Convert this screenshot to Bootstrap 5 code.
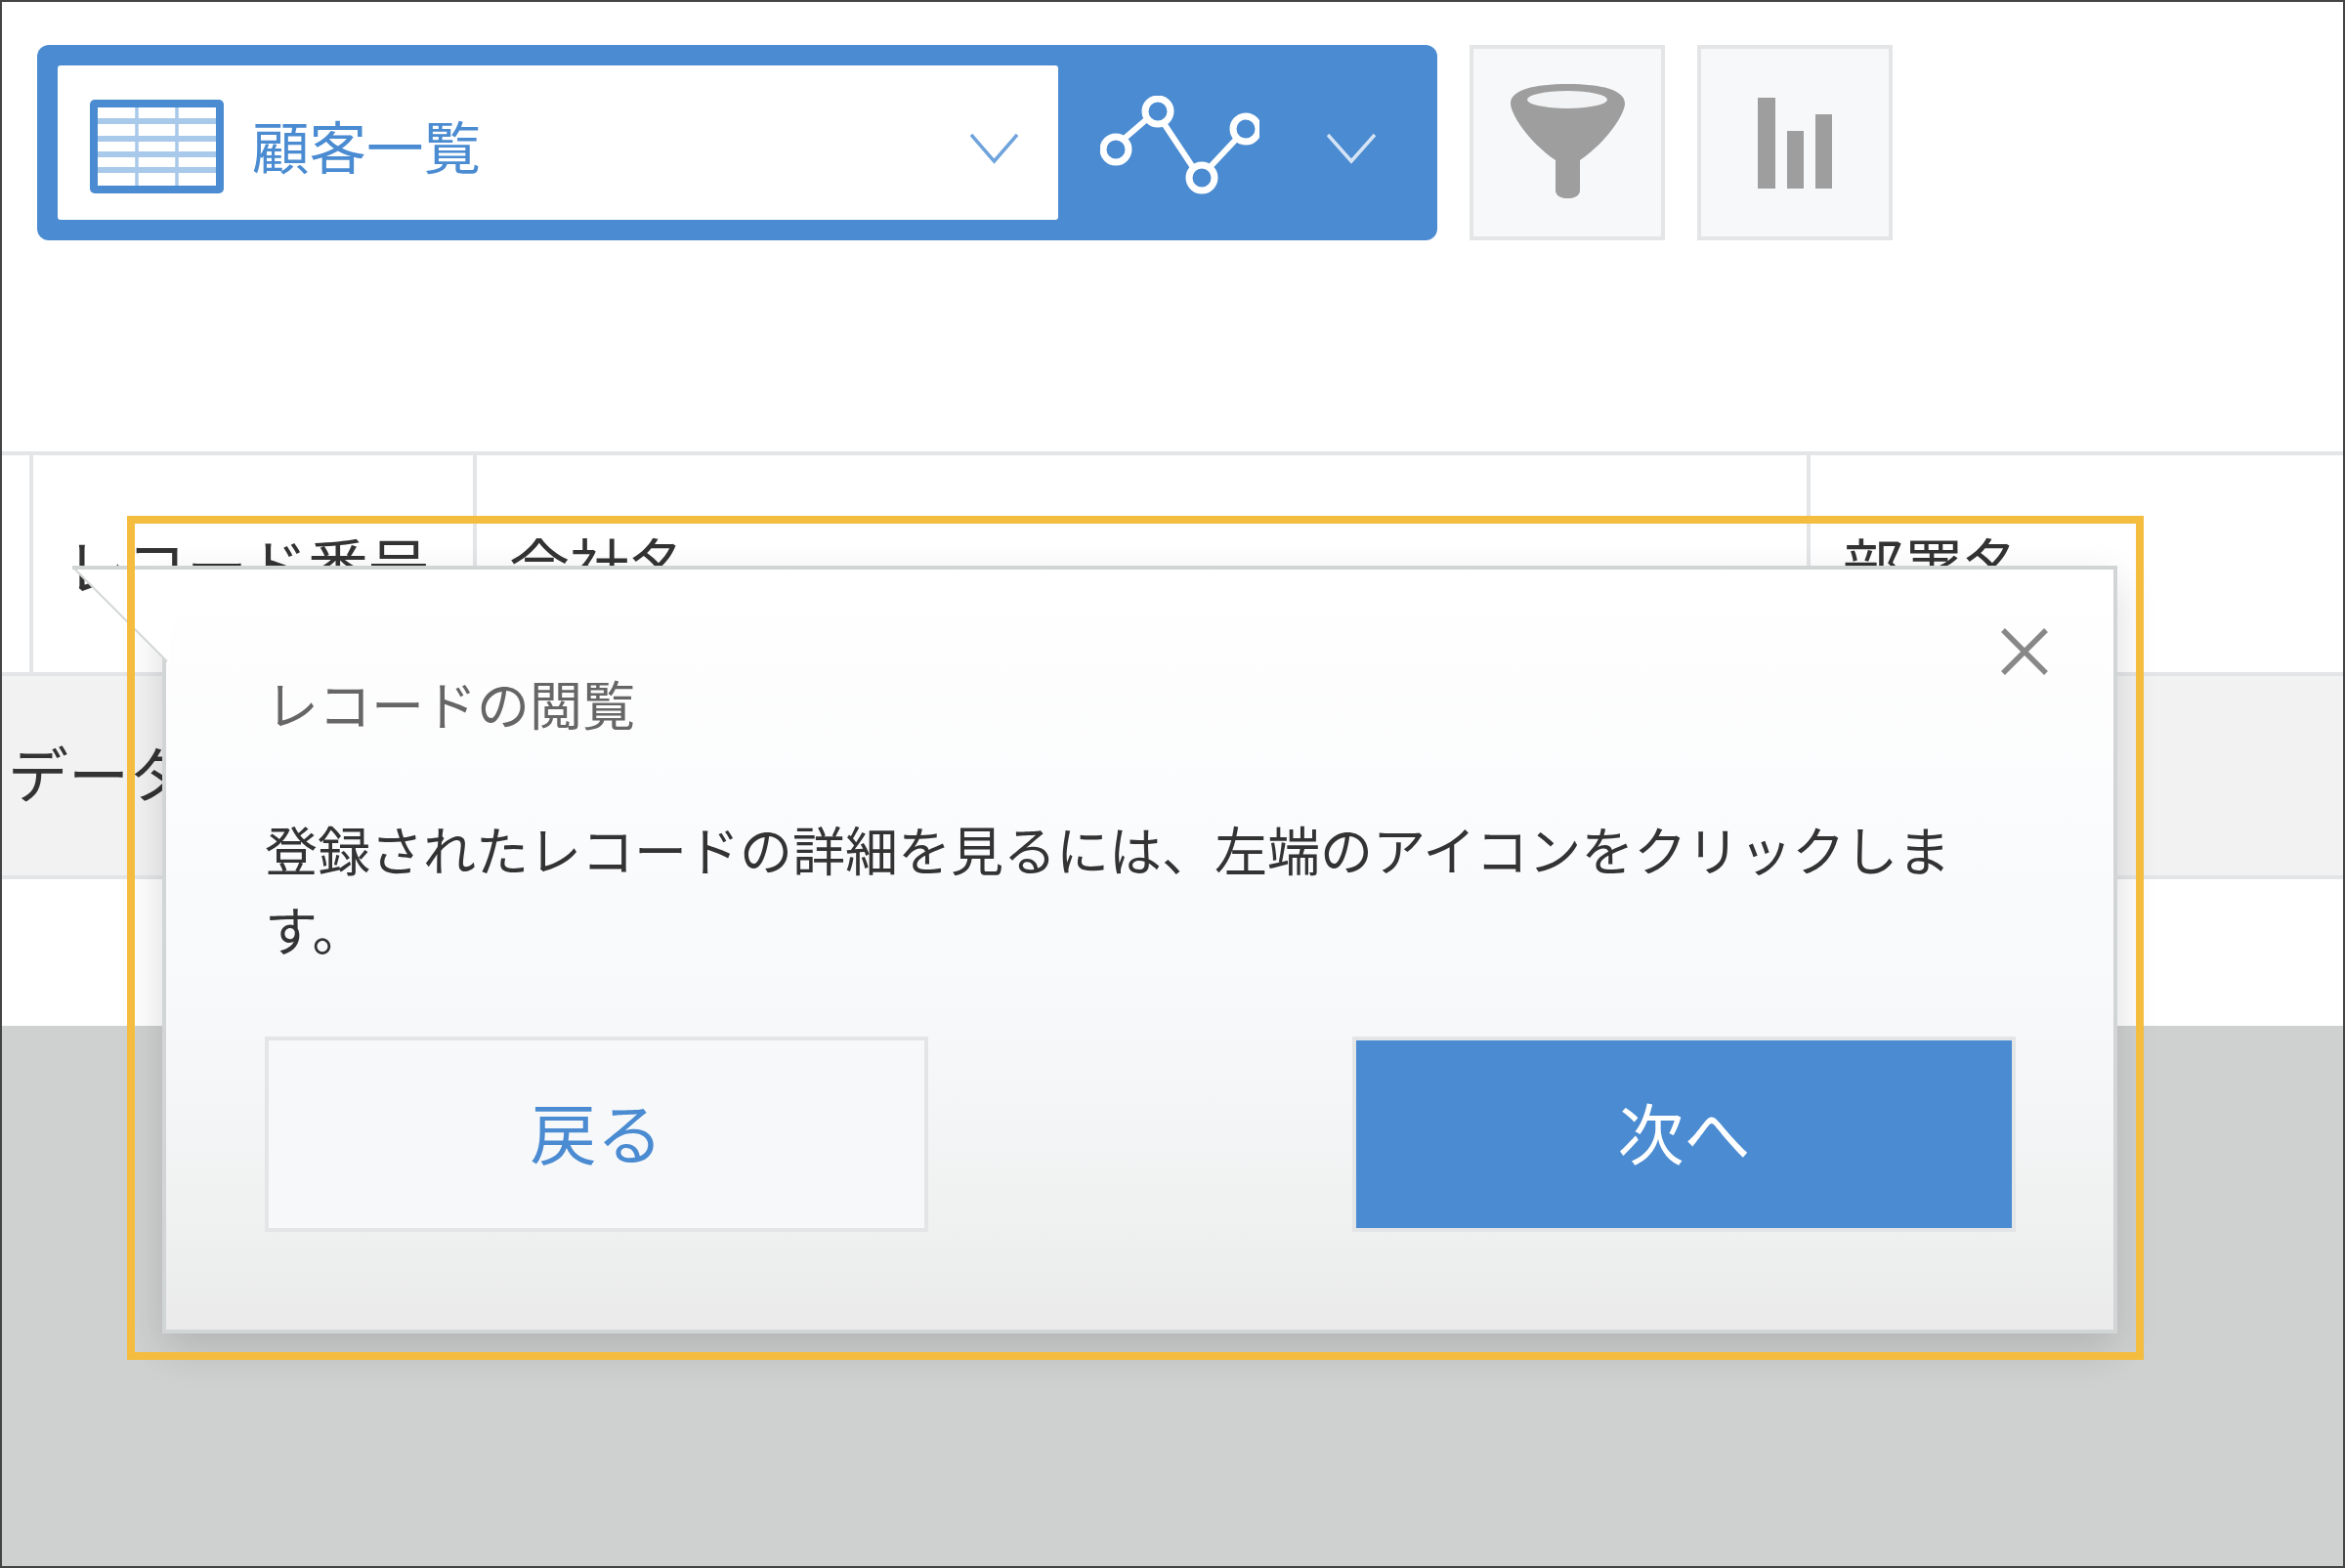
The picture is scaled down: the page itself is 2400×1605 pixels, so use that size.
<!DOCTYPE html>
<html lang="ja">
<head>
    <meta charset="UTF-8">
    <title>顧客一覧</title>
    <link href="https://cdn.jsdelivr.net/npm/bootstrap@5.3.0/dist/css/bootstrap.min.css" rel="stylesheet">
    <style>
        html, body { width: 2400px; height: 1605px; overflow: hidden; }
        body { font-family: "Noto Sans CJK JP", "Liberation Sans", sans-serif; color: #333; background: #fff; }
        .page-frame { width: 2400px; height: 1605px; border: 2px solid #444; }

        /* toolbar */
        .tool-area { height: 200px; margin: 44px 0 216px 36px; gap: 33px; }
        .view-bar { width: 1433px; background: #4a8bd1; border-radius: 12px; }
        .view-select { width: 1024px; height: 158px; margin-left: 21px; padding: 0 41px 0 33px; background: #fff; border-radius: 3px; color: #4a8bd1; font-size: 58.500px; }
        .table-icon { margin-top: 8px; }
        .view-name { margin: 4px 0 0 29px; line-height: 1; }
        .graph-switch { padding-left: 43px; }
        .graph-icon { margin-top: 5px; }
        .chev { margin-top: 10px; }
        .graph-switch .chev { margin-left: 69px; }
        .tool-btn { width: 200px; height: 200px; background: #f7f8fa; border: 4px solid #e3e5e6; border-radius: 0; padding: 0; }
        .tool-btn:hover { background: #f7f8fa; border-color: #e3e5e6; }

        /* record table */
        .record-table { width: 100%; table-layout: fixed; border-collapse: separate; border-spacing: 0; font-size: 62px; }
        .record-table th { height: 226px; padding: 80px 0 0 33px; border-top: 4px solid #e3e5e6; border-left: 4px solid #e3e5e6; font-weight: 400; line-height: 1; vertical-align: top; white-space: nowrap; overflow: hidden; }
        .record-table th.first-col { border-left: 0; padding: 0; }
        .record-table td { height: 212px; padding: 0 0 8px 6px; background: #f2f2f2; border-top: 4px solid #e3e5e6; border-bottom: 4px solid #e3e5e6; white-space: nowrap; vertical-align: middle; }
        .blank-row { height: 150px; }
        .page-gray { background: #cfd1d0; }

        /* tour popup */
        .tour-popup { position: absolute; left: 164px; top: 577px; width: 2001px; height: 786px; padding: 107px 100px 0 101px; background: linear-gradient(#fff 0%, #f8f9fb 54%, #f6f7f8 65%, #eff0f0 86%, #eaeaea 100%); border: 4px solid #d2d5d5; border-radius: 0; box-shadow: 0 16px 40px rgba(0, 0, 0, .14); }
        .tour-arrow { position: absolute; left: 72px; top: 577px; }
        .tour-close { position: absolute; right: 66px; top: 59px; width: 50px; height: 50px; padding: 0; border: 0; background: none; line-height: 0; }
        .tour-title { margin: 0 0 78px 1px; font-size: 54px; line-height: 60px; color: #666; font-weight: 400; }
        .tour-text { width: 1740px; margin: 0 0 69px; font-size: 54px; line-height: 82px; color: #333; }
        .tour-btn { width: 679px; height: 200px; border: 4px solid #e3e5e6; border-radius: 0; padding: 0 0 6px; font-size: 68px; line-height: 1; }
        .tour-back { background: #f7f8fa; color: #4a8bd1; }
        .tour-back:hover { background: #f7f8fa; color: #4a8bd1; border-color: #e3e5e6; }
        .tour-next { background: #4a8bd1; color: #fff; }
        .tour-next:hover { background: #4a8bd1; color: #fff; border-color: #e3e5e6; }
        .tour-mark { position: absolute; left: 128px; top: 526px; width: 2064px; height: 864px; border: 8px solid #f5bd3f; }
    </style>
</head>
<body>
    <div class="page-frame position-relative d-flex flex-column">

        <!-- toolbar -->
        <div class="tool-area d-flex">
            <div class="view-bar d-flex align-items-center">
                <div class="view-select d-flex align-items-center">
                    <svg class="table-icon" width="137" height="96" viewBox="0 0 137 96">
                        <rect width="137" height="96" rx="5" fill="#4a8bd1"/>
                        <rect x="8" y="8" width="121" height="80" fill="#fff"/>
                        <path d="M8 22h121M8 40h121M8 56h121M8 72h121" stroke="#a9c9ea" stroke-width="6"/>
                        <path d="M48 8v80M89 8v80" stroke="#a9c9ea" stroke-width="3.500"/>
                    </svg>
                    <span class="view-name">顧客一覧</span>
                    <svg class="chev ms-auto" width="49" height="33" viewBox="0 0 49 33"><path d="M1 3l23.500 27L48 3" fill="none" stroke="#6fa3dc" stroke-width="3.500"/></svg>
                </div>
                <div class="graph-switch d-flex align-items-center">
                    <svg class="graph-icon" width="163" height="101" viewBox="0 0 163 101">
                        <path d="M14 53L57 16 102 84 149 34" fill="none" stroke="#fff" stroke-width="6"/>
                        <g fill="#4a8bd1" stroke="#fff" stroke-width="7">
                            <circle cx="16" cy="55" r="13"/>
                            <circle cx="59" cy="16" r="13"/>
                            <circle cx="104" cy="84" r="13"/>
                            <circle cx="149" cy="34" r="13"/>
                        </g>
                    </svg>
                    <svg class="chev" width="50" height="33" viewBox="0 0 50 33"><path d="M1 3l24 27L49 3" fill="none" stroke="#d5e4f5" stroke-width="3.500"/></svg>
                </div>
            </div>
            <button class="tool-btn btn d-flex align-items-center justify-content-center">
                <svg class="mb-1" width="117" height="117" viewBox="0 0 117 117">
                    <path d="M0 20C0 6 24 0 58.500 0S117 6 117 20C117 30 100 58 71 78v31c0 11-25 11-25 0V78C17 58 0 30 0 20z" fill="#9e9e9e"/>
                    <ellipse cx="58" cy="16" rx="41" ry="9" fill="#f2f3f4"/>
                </svg>
            </button>
            <button class="tool-btn btn d-flex align-items-center justify-content-center">
                <svg width="76" height="93" viewBox="0 0 76 93">
                    <rect x="0" y="0" width="18" height="93" fill="#9e9e9e"/>
                    <rect x="30" y="34" width="17" height="59" fill="#9e9e9e"/>
                    <rect x="59" y="17" width="17" height="76" fill="#9e9e9e"/>
                </svg>
            </button>
        </div>

        <!-- record list -->
        <table class="record-table">
            <colgroup>
                <col style="width: 28px">
                <col style="width: 454px">
                <col style="width: 1365px">
                <col>
            </colgroup>
            <thead>
                <tr>
                    <th class="first-col"></th>
                    <th>レコード番号</th>
                    <th>会社名</th>
                    <th>部署名</th>
                </tr>
            </thead>
            <tbody>
                <tr><td colspan="4">データ</td></tr>
            </tbody>
        </table>
        <div class="blank-row"></div>
        <div class="page-gray flex-grow-1"></div>

        <!-- tour popup -->
        <div class="tour-popup card">
            <button class="tour-close" aria-label="閉じる">
                <svg width="50" height="50" viewBox="0 0 50 50"><path d="M3 3l44 44M47 3L3 47" stroke="#888" stroke-width="5.500" fill="none"/></svg>
            </button>
            <h5 class="tour-title">レコードの閲覧</h5>
            <p class="tour-text">登録されたレコードの詳細を見るには、左端のアイコンをクリックします。</p>
            <div class="d-flex justify-content-between">
                <button class="tour-btn tour-back btn">戻る</button>
                <button class="tour-btn tour-next btn">次へ</button>
            </div>
        </div>
        <svg class="tour-arrow" width="100" height="100" viewBox="0 0 100 100">
            <path d="M0 0H100V99H98z" fill="#fff"/>
            <path d="M0 1L97 98" stroke="#d5d8d8" stroke-width="2" fill="none"/>
            <rect width="100" height="4" fill="#d2d5d5"/>
        </svg>

        <div class="tour-mark"></div>
    </div>

    <script src="https://cdn.jsdelivr.net/npm/bootstrap@5.3.0/dist/js/bootstrap.bundle.min.js"></script>
</body>
</html>
